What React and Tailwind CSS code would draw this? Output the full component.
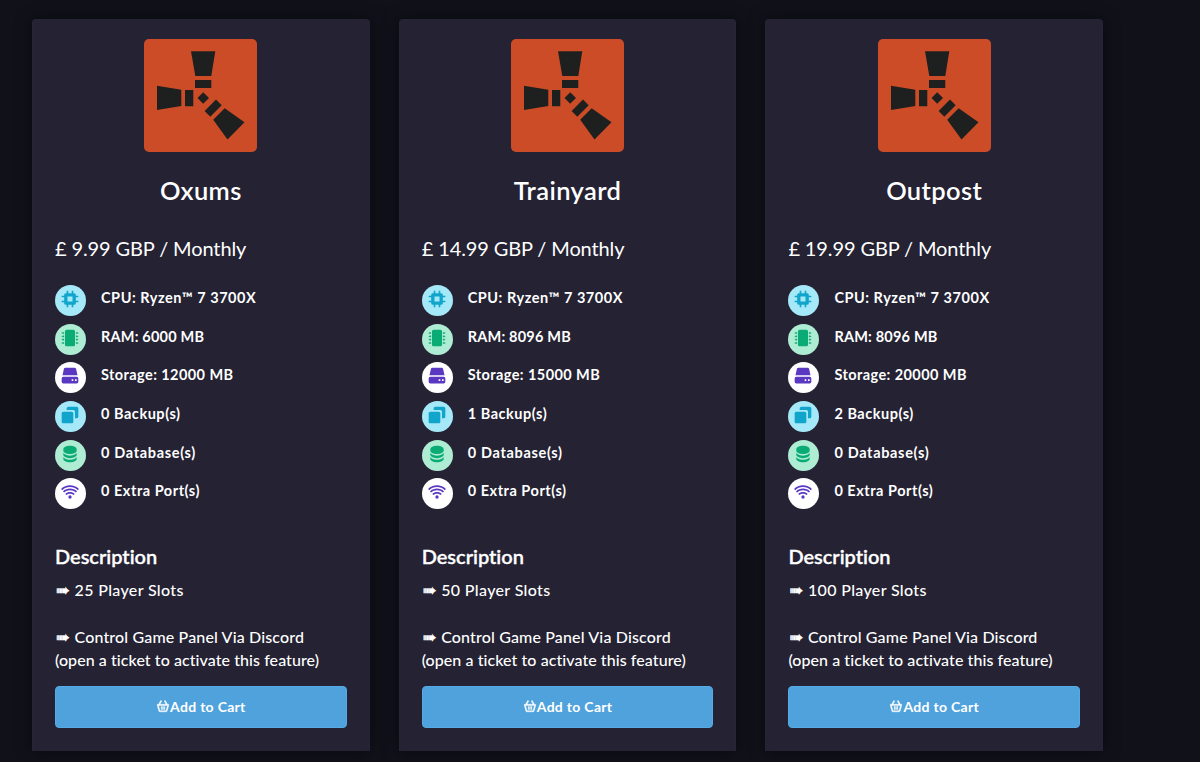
import React from 'react';
import {
  BiBasket,
  BiSolidChip,
  BiSolidCopy,
  BiSolidData,
  BiSolidHdd,
  BiSolidMicrochip,
  BiWifi,
} from 'react-icons/bi';

const plans = [
  { name: 'Oxums', price: '9.99', ram: 6000, storage: 12000, backups: 0, slots: 25 },
  { name: 'Trainyard', price: '14.99', ram: 8096, storage: 15000, backups: 1, slots: 50 },
  { name: 'Outpost', price: '19.99', ram: 8096, storage: 20000, backups: 2, slots: 100 },
];

// Round badge colours
const cyan = 'bg-[#a5e9f8] text-[#12a5cb]';
const green = 'bg-[#aeecd3] text-[#0aab75]';
const white = 'bg-white text-[#5a38c2]';

function GameLogo() {
  return (
    <svg viewBox="0 0 113 113" className="mx-auto block h-[113px] w-[113px] rounded-[5px] bg-[#cd4c28]">
      <g fill="#1e201f">
        <path d="M47 12.3H71.3L67.3 37H51.3Z" />
        <path d="M51 41H67.3V49H51Z" />
        <path d="M13 46.7L37.3 50.7V67L13 71Z" />
        <path d="M41 51H49.3V67.3H41Z" />
        <path d="M59.2 53.2L65 59L59.2 64.8L53.5 59Z" />
        <path d="M72 60.5L77.7 66.2L66.3 77.7L60.6 72Z" />
        <path d="M80.7 69.2L100.5 83.3L83.5 100.5L69.2 80.8Z" />
      </g>
    </svg>
  );
}

function Feature({ icon: Icon, color, tracking = 'tracking-[0.53px]', children }) {
  return (
    <li className="flex h-[38.7px] items-start">
      <span className={`flex h-[31px] w-[31px] shrink-0 items-center justify-center rounded-full pb-[3px] pr-px ${color}`}>
        <Icon className="h-5 w-5" />
      </span>
      <span className={`ml-[15px] mt-[2px] text-[14.5px] font-bold leading-[21px] ${tracking}`}>{children}</span>
    </li>
  );
}

function Arrow() {
  return (
    <span className="inline-block w-[19.5px] pl-px font-['DejaVu_Sans'] text-[16px] leading-none tracking-normal [-webkit-text-stroke:0.4px_white]">
      ➠
    </span>
  );
}

function PlanCard({ plan }) {
  return (
    <div className="h-[732px] w-[337.7px] shrink-0 rounded-t-[4px] border border-b-0 border-[#262436] bg-[#242233] px-[22px] pt-[19px] shadow-[0_0_16px_rgba(0,0,0,0.55)]">
      <GameLogo />
      <h2 className="mt-[20px] text-center text-[25.5px] font-semibold leading-[36px] tracking-[0.4px]">{plan.name}</h2>
      <p className="mt-[25px] text-[20px] leading-[30px] tracking-[-0.12px]">£ {plan.price} GBP / Monthly</p>
      <ul className="mt-[22px]">
        <Feature icon={BiSolidChip} color={cyan}>CPU: Ryzen™ 7 3700X</Feature>
        <Feature icon={BiSolidMicrochip} color={green} tracking="tracking-[0.2px]">RAM: {plan.ram} MB</Feature>
        <Feature icon={BiSolidHdd} color={white} tracking="tracking-[0.42px]">Storage: {plan.storage} MB</Feature>
        <Feature icon={BiSolidCopy} color={cyan}>{plan.backups} Backup(s)</Feature>
        <Feature icon={BiSolidData} color={green} tracking="tracking-[0.67px]">0 Database(s)</Feature>
        <Feature icon={BiWifi} color={white}>0 Extra Port(s)</Feature>
      </ul>
      <h3 className="mt-[26px] text-[20px] font-semibold leading-[26px] tracking-[-0.02px] [-webkit-text-stroke:0.3px_white]">Description</h3>
      <div className="mt-[9px] whitespace-nowrap text-[16px] font-medium leading-[23.2px]">
        <p className="tracking-[0.35px]"><Arrow />{plan.slots} Player Slots</p>
        <p className="mt-[23.2px] tracking-[0.15px]"><Arrow />Control Game Panel Via Discord</p>
        <p className="tracking-[0.07px]">(open a ticket to activate this feature)</p>
      </div>
      <button className="mt-[15px] flex h-[42px] w-full items-center justify-center rounded-[4px] border border-[#55abe5] bg-[#50a2dc] text-[14px] font-bold tracking-[0.3px]">
        <BiBasket className="mb-[2px] h-[14px] w-[14px] stroke-current stroke-[0.7px]" />
        <span>Add to Cart</span>
      </button>
    </div>
  );
}

export default function App() {
  return (
    <div className="h-[762px] w-[1200px] overflow-hidden bg-[#11111a] font-['Lato',sans-serif] text-white">
      <div className="flex gap-[29px] pl-8 pt-[19px]">
        {plans.map((plan) => (
          <PlanCard key={plan.name} plan={plan} />
        ))}
      </div>
    </div>
  );
}
